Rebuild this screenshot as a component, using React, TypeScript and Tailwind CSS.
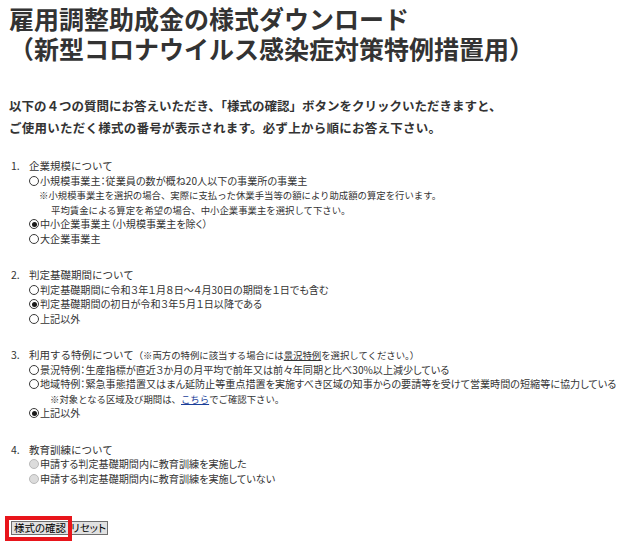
import React from "react";

type RadioState = "off" | "on" | "disabled";

function Radio({ state }: { state: RadioState }) {
  if (state === "disabled") {
    return (
      <span className="inline-block w-[10px] h-[10px] rounded-full border border-[#b9b9b9] bg-[#dcdcdc] mr-[1px] shrink-0" />
    );
  }
  return (
    <span className="inline-flex items-center justify-center w-[10px] h-[10px] rounded-full border border-[#3a3a3a] bg-white mr-[1px] shrink-0">
      {state === "on" && <span className="block w-[5px] h-[5px] rounded-full bg-[#1a1a1a]" />}
    </span>
  );
}

function Option({ state, children }: { state: RadioState; children: React.ReactNode }) {
  return (
    <div className="flex items-center whitespace-nowrap h-[14.5px]">
      <Radio state={state} />
      <span className="text-[10.1px] [font-feature-settings:'palt']">{children}</span>
    </div>
  );
}

function Section({ n, title, children }: { n: string; title: React.ReactNode; children: React.ReactNode }) {
  return (
    <li className="flex mb-[22px]">
      <span className="w-[20px] pl-[2px] shrink-0">{n}</span>
      <div className="flex flex-col">
        <div className="whitespace-nowrap h-[14.5px]">{title}</div>
        {children}
      </div>
    </li>
  );
}

export default function App() {
  return (
    <div className="bg-white min-h-[545px] w-[623px] pl-[9px] pt-[3px] text-[#333] font-['Meiryo','Noto_Sans_CJK_JP','Noto_Sans',sans-serif]">
      <h1 className="text-[25px] font-bold leading-[30px] text-[#333]">
        雇用調整助成金の様式ダウンロード
        <br />
        （新型コロナウイルス感染症対策特例措置用）
      </h1>
      <p className="mt-[32px] text-[12.5px] font-bold leading-[22px]">
        <span>以下の４つの質問にお答えいただき、「様式の確認」ボタンをクリックいただきますと、</span>
        <br />
        <span className="tracking-[0.25px]">ご使用いただく様式の番号が表示されます。必ず上から順にお答え下さい。</span>
      </p>
      <ol className="mt-[20px] text-[10.5px] leading-[14.5px]">
        <Section n="1." title="企業規模について">
          <Option state="off">小規模事業主：従業員の数が概ね20人以下の事業所の事業主</Option>
          <div className="pl-[10px] text-[9.4px] whitespace-nowrap h-[14.5px] flex items-end">
            ※小規模事業主を選択の場合、実際に支払った休業手当等の額により助成額の算定を行います。
          </div>
          <div className="pl-[22px] text-[9.4px] whitespace-nowrap h-[14.5px] flex items-end">
            平均賃金による算定を希望の場合、中小企業事業主を選択して下さい。
          </div>
          <Option state="on">中小企業事業主（小規模事業主を除く）</Option>
          <Option state="off">大企業事業主</Option>
        </Section>
        <Section n="2." title="判定基礎期間について">
          <Option state="off">判定基礎期間に令和３年１月８日～４月30日の期間を１日でも含む</Option>
          <Option state="on">判定基礎期間の初日が令和３年５月１日以降である</Option>
          <Option state="off">上記以外</Option>
        </Section>
        <Section
          n="3."
          title={
            <>
              利用する特例について　
              <span className="text-[9.4px]">
                （※両方の特例に該当する場合には<span className="underline">景況特例</span>を選択してください。）
              </span>
            </>
          }
        >
          <Option state="off">景況特例：生産指標が直近３か月の月平均で前年又は前々年同期と比べ30%以上減少している</Option>
          <Option state="off">
            地域特例：緊急事態措置又はまん延防止等重点措置を実施すべき区域の知事からの要請等を受けて営業時間の短縮等に協力している
          </Option>
          <div className="pl-[21px] text-[9.4px] whitespace-nowrap h-[14.5px] flex items-end">
            ※対象となる区域及び期間は、<span className="text-[#1b3f9a] underline">こちら</span>でご確認下さい。
          </div>
          <Option state="on">上記以外</Option>
        </Section>
        <Section n="4." title="教育訓練について">
          <Option state="disabled">申請する判定基礎期間内に教育訓練を実施した</Option>
          <Option state="disabled">申請する判定基礎期間内に教育訓練を実施していない</Option>
        </Section>
      </ol>
      <div className="relative mt-[35px] ml-[2px] flex items-center [font-feature-settings:'palt']">
        <button className="h-[14px] px-[2px] border border-[#6f6f6f] bg-[#e1e1e1] text-[10.5px] leading-[12px] text-black">
          様式の確認
        </button>
        <button className="h-[14px] px-[1px] border border-[#6f6f6f] bg-[#e1e1e1] text-[10.5px] leading-[12px] text-black">
          リセット
        </button>
        <span className="absolute left-[-6px] top-[-5px] w-[67px] h-[25px] border-4 border-[#e8151b] pointer-events-none" />
      </div>
    </div>
  );
}
